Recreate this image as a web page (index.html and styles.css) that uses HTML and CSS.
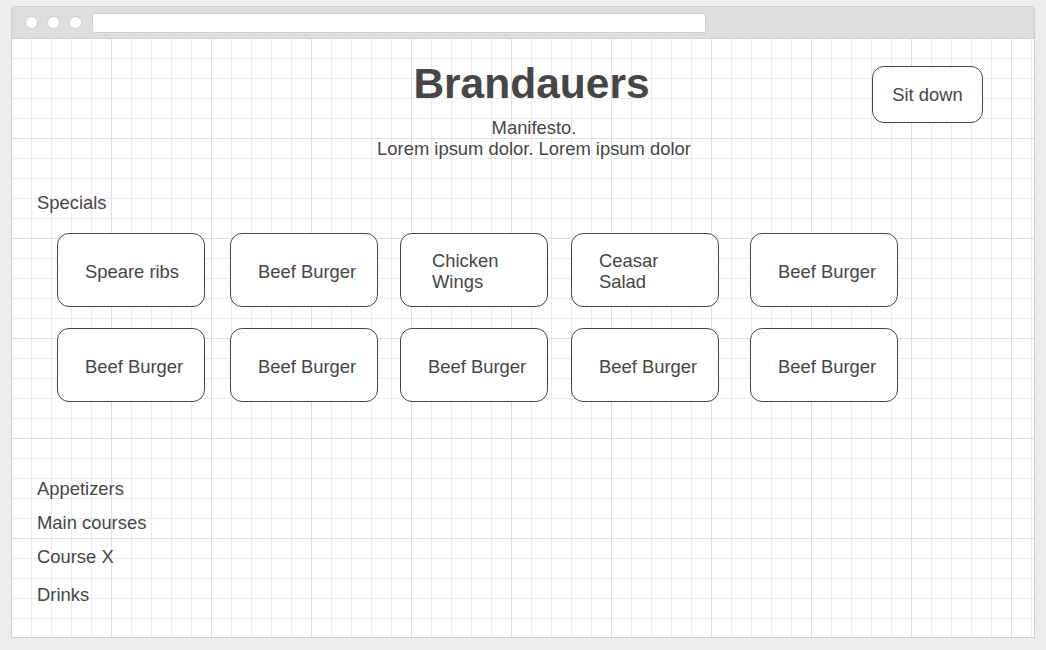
FILE: index.html
```html
<!DOCTYPE html>
<html lang="en">
<head>
  <meta charset="UTF-8">
  <title>Brandauers</title>
  <meta name="viewport" content="width=device-width, initial-scale=1.0">
  <link rel="stylesheet" href="styles.css">
</head>
<body>
  <!-- Browser window frame -->
  <div class="window">
    <div class="titlebar">
      <span class="dot"></span>
      <span class="dot"></span>
      <span class="dot"></span>
      <div class="address"></div>
    </div>

    <!-- Page on a grid canvas -->
    <div class="canvas">
      <header class="top">
        <div class="brand">
          <h1>Brandauers</h1>
          <p>Manifesto.<br>Lorem ipsum dolor. Lorem ipsum dolor</p>
        </div>
        <button class="sit">Sit down</button>
      </header>

      <section class="specials">
        <h2>Specials</h2>
        <div class="cards">
          <div class="card">Speare ribs</div>
          <div class="card">Beef Burger</div>
          <div class="card indent">Chicken Wings</div>
          <div class="card">Ceasar Salad</div>
          <div class="card">Beef Burger</div>
          <div class="card">Beef Burger</div>
          <div class="card">Beef Burger</div>
          <div class="card">Beef Burger</div>
          <div class="card">Beef Burger</div>
          <div class="card">Beef Burger</div>
        </div>
      </section>

      <nav class="courses">
        <a href="#">Appetizers</a>
        <a href="#">Main courses</a>
        <a href="#">Course X</a>
        <a href="#" class="drinks">Drinks</a>
      </nav>
    </div>
  </div>
</body>
</html>
```

FILE: styles.css
```css
/* Page backdrop */
body {
  margin: 0;
  background: #ededed;
  font-family: 'Liberation Sans', Arial, sans-serif;
  color: #464646;
}

/* Browser window */
.window {
  width: 1022px;
  margin: 6px 0 0 11px;
  border: 1px solid #cfcfcf;
  border-radius: 4px 4px 0 0;
  overflow: hidden;
}
.titlebar {
  height: 31px;
  background: #dddddd;
  border-bottom: 1px solid #d2d2d2;
  display: flex;
  align-items: center;
  padding-left: 13px;
  gap: 9px;
}
.dot {
  width: 11px;
  height: 11px;
  border-radius: 50%;
  background: #fff;
  border: 1px solid #cfcfcf;
}
.address {
  width: 612px;
  height: 18px;
  margin-left: 1px;
  background: #fff;
  border: 1px solid #cfcfcf;
  border-radius: 3px;
}

/* Grid paper: minor lines every 20px, major every 100px */
.canvas {
  height: 598px;
  background-color: #fff;
  background-image:
    linear-gradient(to right, transparent 99px, #dedede 99px),
    linear-gradient(to bottom, transparent 99px, #dedede 99px),
    linear-gradient(to right, transparent 19px, #ececec 19px),
    linear-gradient(to bottom, transparent 19px, #ececec 19px);
  background-size: 100px 100px, 100px 100px, 20px 20px, 20px 20px;
}

/* Header */
.top {
  display: grid;
  grid-template-columns: 1fr auto 1fr;
  padding-left: 17px;
}
.brand {
  grid-column: 2;
  text-align: center;
}
.brand h1 {
  margin: 21px 0 9px;
  font-size: 42.5px;
  line-height: 48px;
  font-weight: 700;
}
.brand p {
  margin: 0;
  padding-left: 5px;
  font-size: 18.4px;
  line-height: 21px;
}
.sit {
  grid-column: 3;
  justify-self: end;
  align-self: start;
  margin: 27px 51px 0 0;
  width: 111px;
  height: 57px;
  padding: 0 0 1px;
  background: #fff;
  border: 1px solid #444;
  border-radius: 12px;
  font-family: inherit;
  font-size: 18.4px;
  line-height: 21px;
  color: inherit;
}

/* Specials */
.specials {
  padding-left: 25px;
}
.specials h2 {
  margin: 33px 0 20px;
  font-size: 18.4px;
  line-height: 21px;
  font-weight: 400;
}
.cards {
  display: grid;
  grid-template-columns: 173px 170px 171px 179px 148px;
  row-gap: 21px;
  padding-left: 20px;
}
.card {
  width: 148px;
  height: 74px;
  box-sizing: border-box;
  display: flex;
  align-items: center;
  padding: 2px 14px 0 27px;
  background: #fff;
  border: 1px solid #444;
  border-radius: 12px;
  font-size: 18.4px;
  line-height: 21px;
}
.card.indent { padding-left: 31px; }

/* Course links */
.courses {
  display: flex;
  flex-direction: column;
  align-items: flex-start;
  gap: 13px;
  margin-top: 76px;
  padding-left: 25px;
}
.courses a {
  color: inherit;
  text-decoration: none;
  font-size: 18.4px;
  line-height: 21px;
}
.courses .drinks { margin-top: 4px; }
```
